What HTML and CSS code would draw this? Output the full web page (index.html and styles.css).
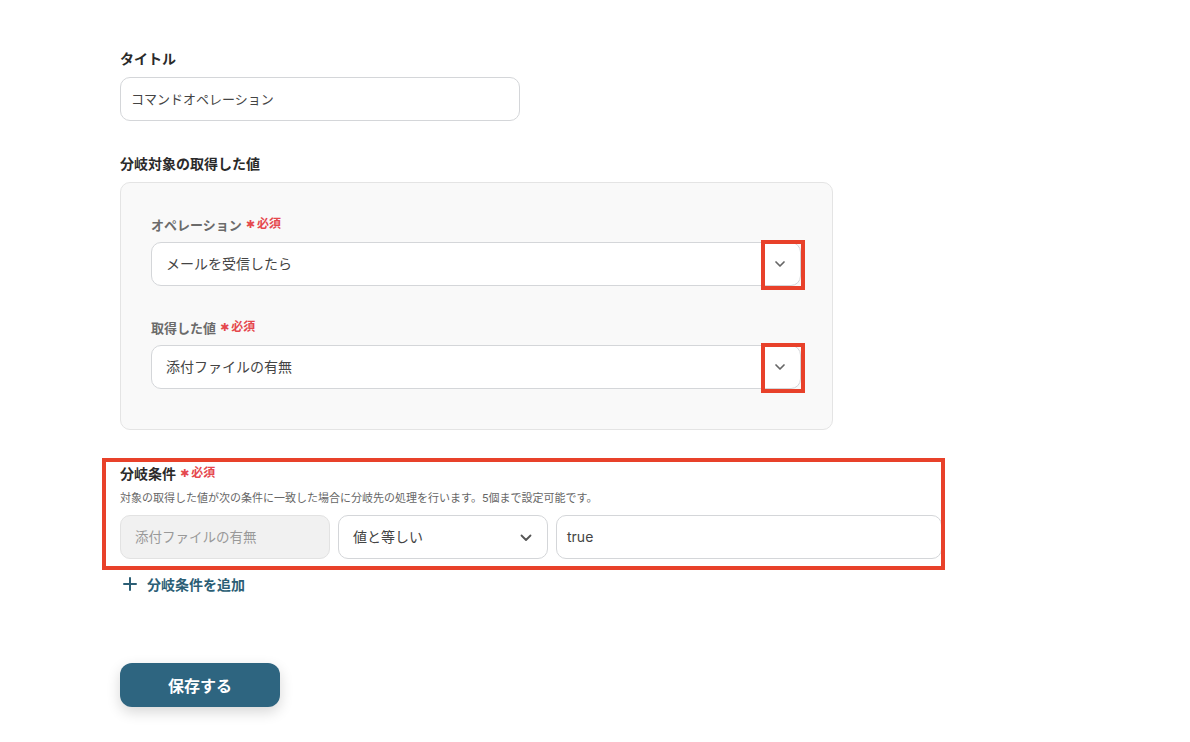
FILE: index.html
```html
<!DOCTYPE html>
<html lang="ja">
<head>
<meta charset="utf-8">
<link rel="stylesheet" href="styles.css">
</head>
<body>
<div class="page">
  <div class="label">タイトル</div>
  <div class="input title-input">コマンドオペレーション</div>

  <div class="label sec">分岐対象の取得した値</div>
  <div class="panel">
    <div class="sublabel">オペレーション <span class="req"><span class="ast">✱</span>必須</span></div>
    <div class="input select wide">
      <span>メールを受信したら</span>
      <svg class="chev" width="12" height="8" viewBox="0 0 12 8"><path d="M2 2l4 4 4-4" fill="none" stroke="#666" stroke-width="1.7" stroke-linecap="round" stroke-linejoin="round"/></svg>
      <div class="mark"></div>
    </div>
    <div class="sublabel gap">取得した値 <span class="req"><span class="ast">✱</span>必須</span></div>
    <div class="input select wide">
      <span>添付ファイルの有無</span>
      <svg class="chev" width="12" height="8" viewBox="0 0 12 8"><path d="M2 2l4 4 4-4" fill="none" stroke="#666" stroke-width="1.7" stroke-linecap="round" stroke-linejoin="round"/></svg>
      <div class="mark"></div>
    </div>
  </div>

  <div class="cond">
    <div class="label">分岐条件 <span class="req"><span class="ast">✱</span>必須</span></div>
    <div class="desc">対象の取得した値が次の条件に一致した場合に分岐先の処理を行います。5個まで設定可能です。</div>
    <div class="row">
      <div class="input f1 disabled">添付ファイルの有無</div>
      <div class="input f2 select">
        <span>値と等しい</span>
        <svg class="chev" width="14" height="9" viewBox="0 0 14 9"><path d="M2.5 2.5l4.5 4.5 4.5-4.5" fill="none" stroke="#555" stroke-width="1.8" stroke-linecap="round" stroke-linejoin="round"/></svg>
      </div>
      <div class="input f3">true</div>
    </div>
    <div class="bigmark"></div>
  </div>

  <div class="add">
    <svg width="14" height="14" viewBox="0 0 14 14"><path d="M7 1v12M1 7h12" stroke="#2b5e75" stroke-width="2" stroke-linecap="round"/></svg>
    <span>分岐条件を追加</span>
  </div>

  <button class="save">保存する</button>
</div>
</body>
</html>
```

FILE: styles.css
```css
* { box-sizing: border-box; }
html, body { margin: 0; background: #ffffff; }
body {
  font-family: Inter, "Noto Sans CJK JP", "Noto Sans", sans-serif;
  color: #333;
}
.page {
  padding: 48px 0 40px 120px;
}
.label, .sublabel {
  display: flex;
  align-items: center;
  gap: 4px;
  height: 20px;
  font-size: 14px;
  font-weight: 700;
  color: #2a2a2a;
  white-space: nowrap;
}
.label.sec { margin-top: 32px; }
.input {
  margin-top: 9px;
  height: 44px;
  border: 1px solid #d4d6d9;
  border-radius: 10px;
  background: #fff;
  font-size: 14px;
  line-height: 42px;
  padding: 0 14px;
  color: #444;
}
.title-input { width: 400px; padding: 0 10px; font-size: 13px; }
.panel {
  margin-top: 9px;
  width: 713px;
  height: 248px;
  background: #f9f9f9;
  border: 1px solid #e4e4e4;
  border-radius: 10px;
  padding: 31px 31px 0 30px;
}
.sublabel {
  font-size: 13px;
  color: #6b6b6b;
}
.sublabel.gap { margin-top: 31px; }
.panel .input { margin-top: 8px; }
.req {
  display: inline-flex;
  align-items: center;
  gap: 2px;
  color: #e5484d;
  font-size: 12px;
  font-weight: 700;
  line-height: 1;
}
.ast {
  font-family: "DejaVu Sans", sans-serif;
  font-size: 11px;
  line-height: 1;
}
.select {
  position: relative;
  display: flex;
  align-items: center;
  justify-content: space-between;
}
.wide { width: 650px; }
.chev { flex: none; }
.mark {
  position: absolute;
  left: 609px;
  top: -3px;
  width: 44px;
  height: 50px;
  border: 4px solid #e8412a;
}
.cond {
  position: relative;
  margin-top: 33px;
  width: 822px;
}
.desc {
  margin-top: 7px;
  font-size: 11px;
  line-height: 16px;
  height: 16px;
  color: #666;
  white-space: nowrap;
}
.row {
  margin-top: 9px;
  display: flex;
  gap: 8px;
}
.row .input { margin-top: 0; }
.f1 {
  width: 210px;
  background: #f1f1f1;
  border-color: #e2e2e2;
  color: #999;
  font-size: 13.5px;
}
.f2 { width: 210px; }
.f3 { width: 386px; padding: 0 10px; }
.bigmark {
  position: absolute;
  left: -18px;
  top: -5px;
  width: 843px;
  height: 112px;
  border: 4px solid #e8412a;
  pointer-events: none;
}
.add {
  margin-top: 15px;
  display: flex;
  align-items: center;
  gap: 10px;
  padding-left: 3px;
  height: 20px;
  font-size: 14px;
  font-weight: 700;
  color: #2b5e75;
}
.save {
  margin-top: 69px;
  width: 160px;
  height: 44px;
  border: none;
  border-radius: 12px;
  background: #2e6580;
  color: #fff;
  font-family: "Noto Sans CJK JP", sans-serif;
  font-size: 16px;
  font-weight: 700;
  box-shadow: 0 5px 14px rgba(0, 0, 0, 0.16);
  display: block;
  padding: 0;
}
```
